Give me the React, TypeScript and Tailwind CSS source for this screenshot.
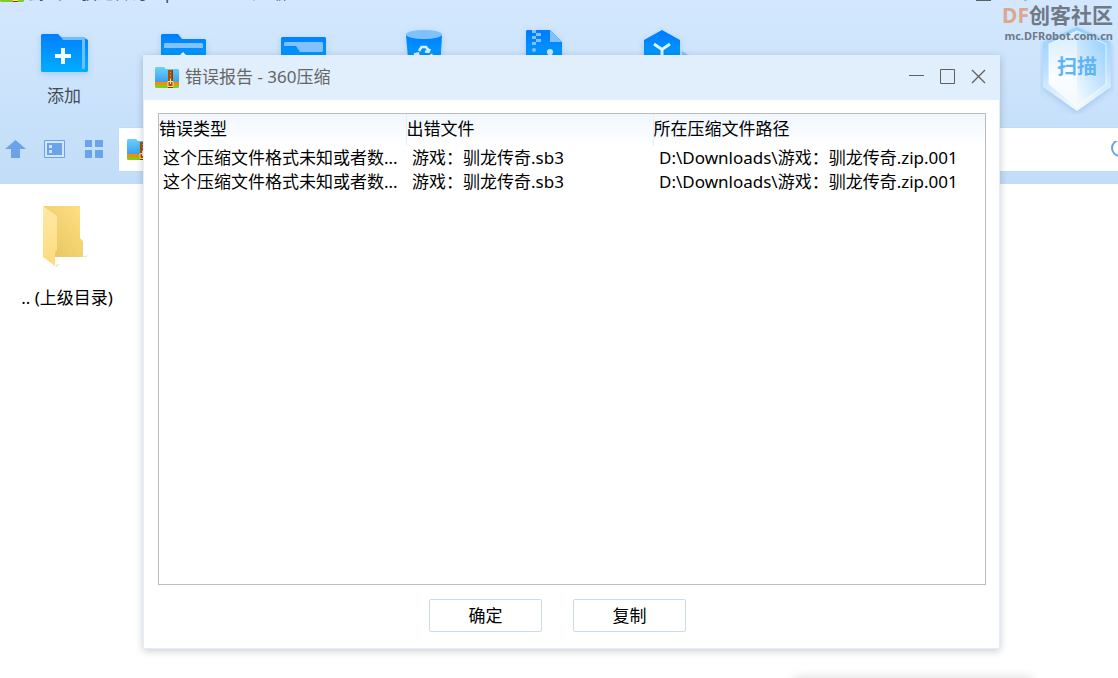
import type { ReactNode } from "react";

type ReportRow = {
  type: string;
  file: string;
  path: string;
};

const MAX_TYPE_LENGTH = 13;

const REPORT_ROWS: ReportRow[] = [
  {
    type: "这个压缩文件格式未知或者数据已经被损坏",
    file: "游戏：驯龙传奇.sb3",
    path: "D:\\Downloads\\游戏：驯龙传奇.zip.001",
  },
  {
    type: "这个压缩文件格式未知或者数据已经被损坏",
    file: "游戏：驯龙传奇.sb3",
    path: "D:\\Downloads\\游戏：驯龙传奇.zip.001",
  },
];

function shorten(text: string): string {
  return text.length > MAX_TYPE_LENGTH ? `${text.slice(0, MAX_TYPE_LENGTH)}...` : text;
}

function ArchiveIcon({ className }: { className: string }) {
  return (
    <svg viewBox="0 0 24 24" className={className} aria-hidden="true">
      <defs>
        <linearGradient id="archive-fill" x1="0" y1="0" x2="0" y2="1">
          <stop offset="0" stopColor="#6bd0fb" />
          <stop offset="1" stopColor="#369fec" />
        </linearGradient>
      </defs>
      <path d="M0 3V2L1 1H9L11 3H23L24 4V17H0Z" fill="url(#archive-fill)" />
      <path d="M0 16H24V19H0Z" fill="#ff8a00" />
      <path d="M0 19H24V21L23 22H1L0 21Z" fill="#7ccf20" />
      <path d="M13 4H18V22H13Z" fill="#a85208" />
      <path d="M17 4H18V16H17ZM13 20H18V22H13Z" fill="#8a3e04" />
      <path d="M15 6H16V7H15ZM15 9H16V10H15ZM15 12H16V13H15Z" fill="#d89040" />
      <path d="M13 15.500H18V20.500H13ZM15.500 13V18" fill="none" stroke="#ffdf9a" />
    </svg>
  );
}

function ToolIcon({ children }: { children: ReactNode }) {
  return (
    <svg
      viewBox="0 0 48 44"
      className="h-11 w-12 drop-shadow-[0_2px_3px_rgba(60,140,230,0.25)]"
      aria-hidden="true"
    >
      <defs>
        <linearGradient id="tool-fill" x1="0" y1="4" x2="0" y2="42" gradientUnits="userSpaceOnUse">
          <stop offset="0" stopColor="#007eff" />
          <stop offset="1" stopColor="#00aeff" />
        </linearGradient>
      </defs>
      {children}
    </svg>
  );
}

const TOOLS: { label: string; showLabel?: boolean; icon: ReactNode }[] = [
  {
    label: "添加",
    showLabel: true,
    icon: (
      <>
        <path d="M1 5L2 4H18L21 7H43L48 10V41L47 42H2L1 41Z" fill="url(#tool-fill)" />
        <path d="M21 7H44L45 8V38L44 39H42V10H23Z" fill="#73bdff" />
        <path d="M21 18H25V24H31V28H25V34H21V28H15V24H21Z" fill="#f0faff" />
      </>
    ),
  },
  {
    label: "解压到",
    icon: (
      <>
        <path d="M1 5L2 4H18L22 9H45L46 10V41L45 42H2L1 41Z" fill="url(#tool-fill)" />
        <path d="M4 14L5 13H42L43 14V18H4Z" fill="#80c2ff" />
        <path d="M23 22L29 28H25V36H21V28H17Z" fill="#f0faff" />
      </>
    ),
  },
  {
    label: "一键解压",
    icon: (
      <>
        <path d="M1 8L2 7H45L46 8V41L45 42H2L1 41Z" fill="url(#tool-fill)" />
        <path d="M4 13L5 12H42L43 13V21L42 22H20L16 16H4Z" fill="#80c2ff" />
      </>
    ),
  },
  {
    label: "删除",
    icon: (
      <>
        <path d="M6 5H42L40 40Q24 46 9 40Z" fill="url(#tool-fill)" />
        <ellipse cx="24" cy="4.500" rx="18" ry="4.500" fill="#80c2ff" />
        <path
          d="M19 21L21.500 17H26L29 21M30 19L28.500 22L25 21.500M31 24L33 28L31 32H26M17 23L14.500 28L17 32H22M14 24.500L18 23.500L19 27"
          fill="none"
          stroke="#d9f1ff"
          strokeWidth="2.500"
        />
      </>
    ),
  },
  {
    label: "压缩文件",
    icon: (
      <>
        <path d="M6 1L7 0H30L42 12V42H6Z" fill="url(#tool-fill)" />
        <path d="M30 0L42 12H30Z" fill="#80c2ff" />
        <path d="M12 0H16V3H12ZM16 3H21V6H16ZM12 6H16V9H12ZM16 9H21V12H16ZM12 12H16V15H12Z" fill="#80c2ff" />
        <circle cx="14" cy="20" r="2" fill="#80c2ff" />
        <circle cx="30" cy="22" r="3" fill="#c5ebff" />
        <path d="M28 24H32V34H28Z" fill="#c5ebff" />
      </>
    ),
  },
  {
    label: "自解压",
    icon: (
      <>
        <path d="M22 0L40 10V32L22 42L4 32V10Z" fill="url(#tool-fill)" />
        <path d="M42 21L48 25V32H42Z" fill="#80c2ff" />
        <path d="M14 14L22 19.500L30 14M22 19.500V32" fill="none" stroke="#d9f6ff" strokeWidth="3" />
      </>
    ),
  },
];

function ScanBadge() {
  return (
    <button
      type="button"
      className="absolute top-6 right-1 flex h-[90px] w-[74px] items-center justify-center text-xl font-bold text-[#5db4f8]"
    >
      <svg viewBox="0 0 74 90" className="absolute inset-0 size-full" aria-hidden="true">
        <defs>
          <linearGradient id="scan-rim" x1="0" y1="0" x2="0" y2="1">
            <stop offset="0" stopColor="#93d1ff" />
            <stop offset="0.5" stopColor="#b9dfff" />
            <stop offset="1" stopColor="#f7fbff" />
          </linearGradient>
          <linearGradient id="scan-left" x1="0" y1="0" x2="0" y2="1">
            <stop offset="0" stopColor="#d5ecfe" />
            <stop offset="0.6" stopColor="#fbfdff" />
            <stop offset="1" stopColor="#f3f9ff" />
          </linearGradient>
          <linearGradient id="scan-right" x1="1" y1="0" x2="0.2" y2="1">
            <stop offset="0" stopColor="#8ccdff" />
            <stop offset="0.6" stopColor="#cbe7fe" />
            <stop offset="1" stopColor="#f0f8ff" />
          </linearGradient>
        </defs>
        <path
          d="M37 3L71 18V63L37 87L3 63V18Z"
          fill="url(#scan-rim)"
          className="drop-shadow-[0_2px_3px_rgba(100,160,230,0.4)]"
        />
        <path d="M37 7L9 20V60L37 83Z" fill="url(#scan-left)" />
        <path d="M37 7L66 20V60L37 83Z" fill="url(#scan-right)" />
        <path d="M37 7L66 20V60L37 83L9 60V20Z" fill="none" stroke="#ffffff" strokeOpacity="0.7" />
      </svg>
      <span className="relative pb-1">扫描</span>
    </button>
  );
}

function ArchiverWindow() {
  return (
    <>
      <header className="relative bg-linear-to-b from-[#d3e8fe] to-[#c2ddf8] pb-[13px]">
        <div className="flex h-[5px] items-end justify-between overflow-hidden text-[#4a4f56]">
          <div className="flex items-end gap-[5px]">
            <ArchiveIcon className="mb-px size-6" />
            <span className="leading-6">游戏：驯龙传奇.zip.001 - 360压缩</span>
          </div>
          <svg viewBox="0 0 142 5" className="h-[5px] w-[142px]" aria-hidden="true">
            <path d="M0 0H15V1H0Z" fill="#5c6066" />
            <path d="M48 0H51V1H48Z" fill="#a9b6c4" />
          </svg>
        </div>

        <nav className="flex pt-[25px] pl-1">
          {TOOLS.map((tool) => (
            <button
              key={tool.label}
              type="button"
              aria-label={tool.label}
              className="flex h-[98px] w-[120px] shrink-0 flex-col items-center gap-[10px] text-[#444b55]"
            >
              <ToolIcon>{tool.icon}</ToolIcon>
              {tool.showLabel ? <span className="leading-6">{tool.label}</span> : null}
            </button>
          ))}
        </nav>

        <div className="flex h-[43px] items-center">
          <div className="flex w-[119px] shrink-0 items-center gap-[18px] pb-[2px] pl-[5px] text-[#6ba2ec]">
            <button type="button" aria-label="向上">
              <svg viewBox="0 0 21 18" className="h-[18px] w-[21px]" fill="currentColor">
                <path d="M10.500 0L21 9H15V18H6V9H0Z" />
              </svg>
            </button>
            <button type="button" aria-label="列表">
              <svg viewBox="0 0 21 18" className="h-[18px] w-[21px]">
                <path d="M0.500 0.500H20.500V17.500H0.500Z" fill="#d3e6fc" stroke="currentColor" />
                <path d="M3 3H18V15H3Z" fill="currentColor" />
                <path d="M5 5H8V8H5ZM5 10H8V13H5Z" fill="#d3e6fc" />
              </svg>
            </button>
            <button type="button" aria-label="图标">
              <svg viewBox="0 0 20 18" className="h-[18px] w-5" fill="currentColor">
                <path d="M2 0H9V7H2ZM12 0H20V7H12ZM2 10H9V18H2ZM12 10H20V18H12Z" />
              </svg>
            </button>
          </div>
          <div className="flex h-full min-w-0 flex-1 items-center overflow-hidden bg-white pl-2 shadow-[0_0_1px_#a9c9ee]">
            <ArchiveIcon className="size-6 shrink-0" />
            <input type="text" aria-label="路径" className="min-w-0 flex-1 outline-none" />
            <svg viewBox="0 0 7 18" className="h-[18px] w-[7px] shrink-0" fill="none" aria-hidden="true">
              <circle cx="9" cy="7" r="8" stroke="#6a9ff0" strokeWidth="2" />
            </svg>
          </div>
        </div>

        <ScanBadge />
        <div className="absolute top-[2px] right-[5px] flex flex-col items-end font-bold text-[#707986]">
          <span className="text-[21px] leading-[26px]">
            <span className="text-[#dda78f]">DF</span>创客社区
          </span>
          <span className="text-[11px] leading-4">mc.DFRobot.com.cn</span>
        </div>
      </header>

      <main className="flex pt-5">
        <button type="button" className="flex w-[134px] flex-col items-center gap-[18px] text-black">
          <svg viewBox="0 0 50 64" className="h-16 w-[50px]" aria-hidden="true">
            <defs>
              <linearGradient id="folder-back" x1="0" y1="1" x2="1" y2="0">
                <stop offset="0" stopColor="#e5c25c" />
                <stop offset="1" stopColor="#ffe084" />
              </linearGradient>
              <linearGradient id="folder-front" x1="0" y1="0" x2="0" y2="1">
                <stop offset="0" stopColor="#ffe9a6" />
                <stop offset="1" stopColor="#fddb7d" />
              </linearGradient>
            </defs>
            <path d="M40 53L46 51L44 53ZM13 61L18 60L14 63Z" fill="#e2e2e2" />
            <path d="M1 2H38V34L41 37V53H12Z" fill="url(#folder-back)" />
            <path d="M1 2L15 12V46L13 48V62L1 53Z" fill="url(#folder-front)" />
          </svg>
          <span className="leading-6">.. (上级目录)</span>
        </button>
      </main>
    </>
  );
}

function ErrorReportDialog() {
  return (
    <section
      role="dialog"
      aria-labelledby="report-title"
      className="absolute top-[55px] right-[118px] bottom-[29px] left-[143px] flex flex-col border border-[#e1eefc] bg-white shadow-[0_2px_8px_rgba(0,0,0,0.2)]"
    >
      <div className="flex h-11 shrink-0 items-center justify-between bg-[#e1eefc] pr-3 pl-[11px]">
        <div className="flex items-center gap-[6px]">
          <ArchiveIcon className="size-6" />
          <h1 id="report-title" className="pb-[2px] leading-6 text-[#666666]">
            错误报告 - 360压缩
          </h1>
        </div>
        <div className="flex items-center gap-[15px] pb-1 text-[#606060]">
          <button type="button" aria-label="最小化">
            <svg viewBox="0 0 16 16" className="size-4">
              <path d="M0 7H15V8H0Z" fill="currentColor" />
            </svg>
          </button>
          <button type="button" aria-label="最大化">
            <svg viewBox="0 0 16 16" className="size-4">
              <path d="M0.500 1.500H14.500V15.500H0.500Z" fill="none" stroke="currentColor" />
            </svg>
          </button>
          <button type="button" aria-label="关闭">
            <svg viewBox="0 0 16 16" className="size-4">
              <path d="M1 2L14 15M14 2L1 15" stroke="currentColor" strokeWidth="1.300" />
            </svg>
          </button>
        </div>
      </div>

      <div className="flex min-h-0 flex-1 flex-col pt-[13px] pr-[13px] pb-4 pl-[14px]">
        <div className="min-h-0 flex-1 overflow-hidden border border-[#bcbcbc]">
          <table className="w-full table-fixed text-left text-black">
            <colgroup>
              <col className="w-[247px]" />
              <col className="w-[247px]" />
              <col />
            </colgroup>
            <thead className="bg-linear-to-b from-[#f0f7fe] to-white">
              <tr className="h-8">
                <th className="p-0 pb-[2px] font-normal">错误类型</th>
                <th className="border-l border-[#e3f0fb] p-0 pb-[2px] font-normal">出错文件</th>
                <th className="border-l border-[#e3f0fb] p-0 pb-[2px] font-normal">所在压缩文件路径</th>
              </tr>
            </thead>
            <tbody className="leading-6 whitespace-nowrap">
              {REPORT_ROWS.map((row, index) => (
                <tr key={index}>
                  <td title={row.type} className="py-0 pl-1">
                    {shorten(row.type)}
                  </td>
                  <td className="py-0 pl-[6px]">{row.file}</td>
                  <td className="py-0 pl-[6px]">{row.path}</td>
                </tr>
              ))}
            </tbody>
          </table>
        </div>

        <div className="flex justify-center gap-[31px] pt-[14px] pr-[29px] text-black">
          <button type="button" className="h-[33px] w-[113px] rounded-xs border border-[#c9dbf2]">
            确定
          </button>
          <button type="button" className="h-[33px] w-[113px] rounded-xs border border-[#c9dbf2]">
            复制
          </button>
        </div>
      </div>
    </section>
  );
}

export default function App() {
  return (
    <div
      lang="zh-CN"
      className="relative min-h-screen overflow-hidden bg-white font-['Noto_Sans','Noto_Sans_CJK_SC',sans-serif] text-[17px]"
    >
      <ArchiverWindow />
      <ErrorReportDialog />
      {/* top edge of a popup that sits below the window */}
      <div className="absolute top-full right-[86px] h-10 w-[238px] shadow-[0_0_10px_rgba(0,0,0,0.15)]" />
    </div>
  );
}
